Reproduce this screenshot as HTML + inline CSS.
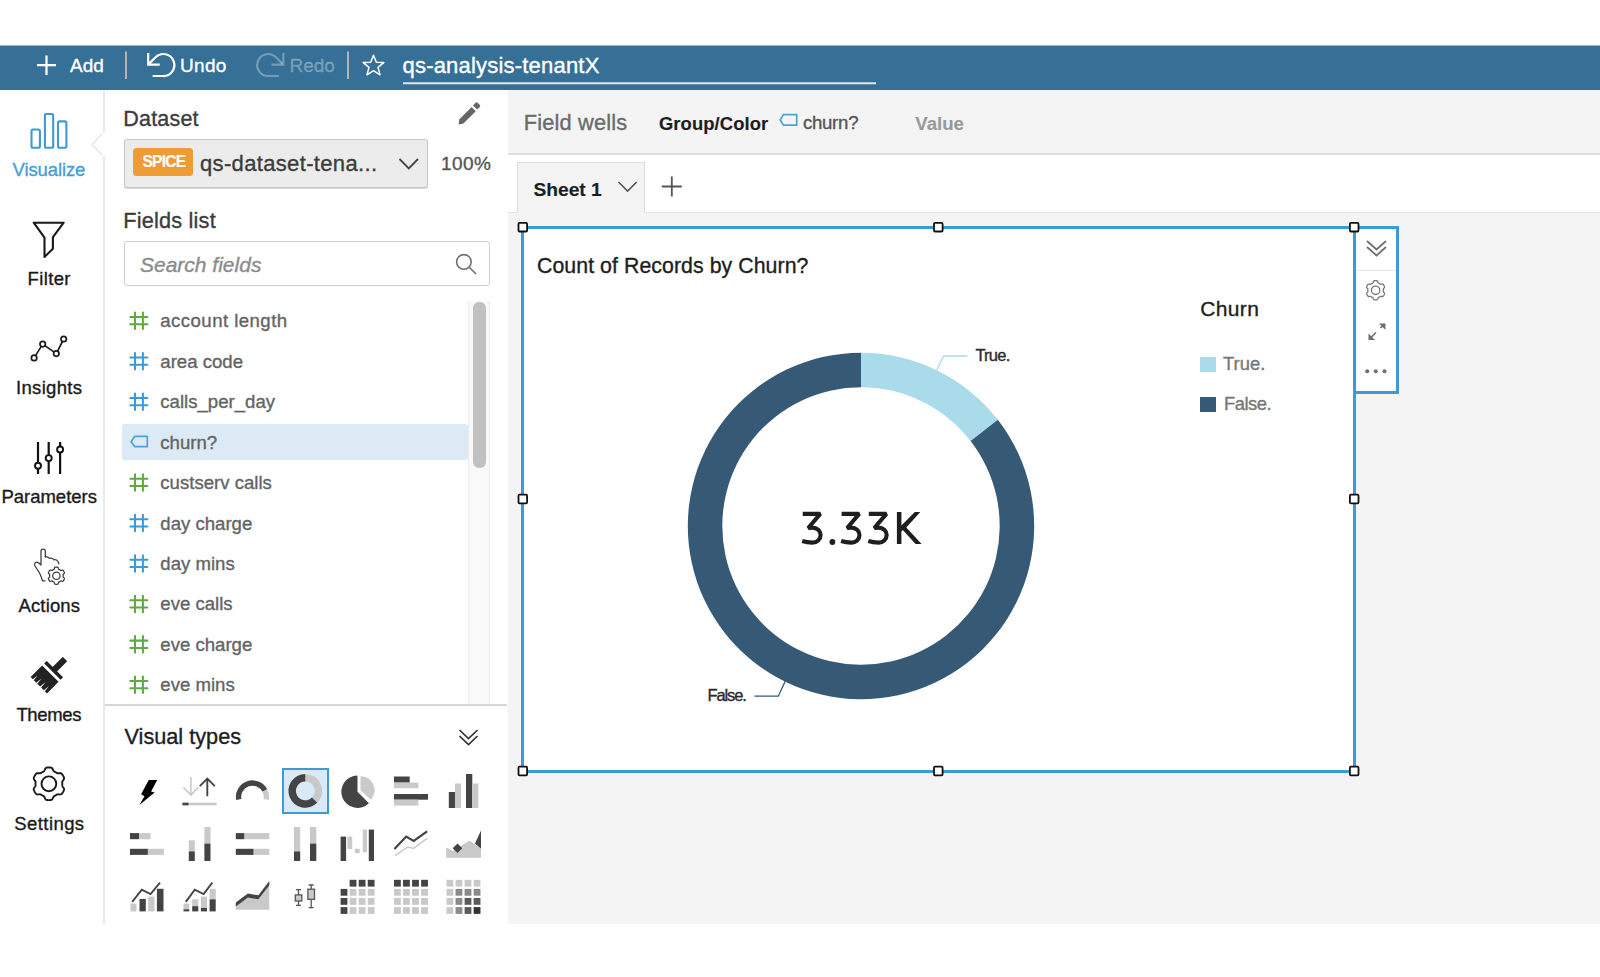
<!DOCTYPE html>
<html><head><meta charset="utf-8">
<style>
*{box-sizing:border-box;margin:0;padding:0}
html,body{width:1600px;height:977px;overflow:hidden;background:#fff;font-family:"Liberation Sans",sans-serif;position:relative}
.a{position:absolute;white-space:nowrap}
svg.a{overflow:visible}
</style></head><body>
<div class="a" style="left:0px;top:45px;width:1600px;height:1px;background:#9bb8ca"></div>
<div class="a" style="left:0px;top:46px;width:1600px;height:44px;background:#367096"></div>
<div class="a" style="left:103.2px;top:90px;width:2px;height:834px;background:#e9e9e9"></div>
<div class="a" style="left:507.5px;top:90px;width:1.5px;height:834px;background:#e2e2e2"></div>
<div class="a" style="left:508px;top:90px;width:1092px;height:63px;background:#f4f4f4"></div>
<div class="a" style="left:508px;top:153px;width:1092px;height:2px;background:#dcdcdc"></div>
<div class="a" style="left:508px;top:155px;width:1092px;height:57px;background:#fff"></div>
<div class="a" style="left:508px;top:212px;width:1092px;height:1px;background:#e4e4e4"></div>
<div class="a" style="left:508px;top:213px;width:1092px;height:711px;background:#f4f4f4"></div>
<svg class="a" style="left:0;top:0" width="1600" height="977" viewBox="0 0 1600 977"><g stroke="#fff" stroke-width="2.2" fill="none"><path d="M46.5,55.5V75M37,65.2H56"/><path d="M148.2,54V64.6H158.6" stroke-linecap="square"/><path d="M149.2,63.6L155.5,57.3A11,11 0 1 1 162.6,76H152.6"/></g><g stroke="rgba(255,255,255,0.3)" stroke-width="2.2" fill="none"><path d="M283.3,54V64.6H272.5" stroke-linecap="square"/><path d="M282.3,63.6L276,57.3A11,11 0 1 0 268.9,76H278.9"/></g><path d="M126,51.5V79M348,51.5V79" stroke="#b4b4b4" stroke-width="2"/><path d="M373.5,55.2L376.3,62.2L383.8,62.6L378,67.4L380,74.8L373.5,70.6L367,74.8L369,67.4L363.2,62.6L370.7,62.2Z" stroke="#fff" stroke-width="1.5" fill="none" stroke-linejoin="round"/><path d="M403,83.2H876" stroke="#dfe7ee" stroke-width="2"/></svg>
<div class="a" style="left:70.0px;top:56.3px;font-size:19px;line-height:19px;color:#fff;font-weight:400;font-style:normal;letter-spacing:0px;-webkit-text-stroke:0.35px #fff;">Add</div>
<div class="a" style="left:180.0px;top:56.3px;font-size:19px;line-height:19px;color:#fff;font-weight:400;font-style:normal;letter-spacing:0.3px;-webkit-text-stroke:0.35px #fff;">Undo</div>
<div class="a" style="left:289.5px;top:56.3px;font-size:19px;line-height:19px;color:rgba(255,255,255,0.3);font-weight:400;font-style:normal;letter-spacing:0px;-webkit-text-stroke:0.35px rgba(255,255,255,0.3);">Redo</div>
<div class="a" style="left:402.5px;top:55.4px;font-size:22px;line-height:22px;color:#fff;font-weight:400;font-style:normal;letter-spacing:0.2px;-webkit-text-stroke:0.35px #fff;">qs-analysis-tenantX</div>
<svg class="a" style="left:0;top:0" width="1600" height="977" viewBox="0 0 1600 977"><path d="M104.5,131.5L92,144.5L104.5,157.5" stroke="#e4e4e4" stroke-width="1.3" fill="#fff"/><rect x="102.5" y="132.5" width="3" height="24" fill="#fff"/></svg>
<svg class="a" style="left:0;top:0" width="1600" height="977" viewBox="0 0 1600 977"><g fill="none" stroke="#3d9ad6" stroke-width="2.1"><rect x="31.5" y="129.5" width="8.4" height="18.2" rx="1.5"/><rect x="44.9" y="114" width="8.3" height="33.7" rx="1.5"/><rect x="58" y="121.4" width="8.4" height="26.3" rx="1.5"/></g></svg>
<svg class="a" style="left:0;top:0" width="1600" height="977" viewBox="0 0 1600 977"><path d="M33.7,222.7H63.7L52.9,237.1V248.7L44.5,256.9V237.6Z" fill="none" stroke="#1a1a1a" stroke-width="2.1" stroke-linejoin="round"/></svg>
<svg class="a" style="left:0;top:0" width="1600" height="977" viewBox="0 0 1600 977"><g fill="#fff" stroke="#1a1a1a" stroke-width="1.7"><path d="M34.1,357.9L42.7,344.1L56.3,353.6L63.7,339" fill="none"/><circle cx="34.1" cy="357.9" r="2.7"/><circle cx="42.7" cy="344.1" r="2.7"/><circle cx="56.3" cy="353.6" r="2.7"/><circle cx="63.7" cy="339" r="2.7"/></g></svg>
<svg class="a" style="left:0;top:0" width="1600" height="977" viewBox="0 0 1600 977"><g fill="#fff" stroke="#111" stroke-width="2.2"><path d="M38,442V474M48.7,442V474M60.1,442V474"/></g><g fill="#fff" stroke="#111" stroke-width="1.9"><circle cx="38" cy="465.7" r="3"/><circle cx="48.7" cy="458.1" r="3"/><circle cx="60.1" cy="449.5" r="3"/></g></svg>
<svg class="a" style="left:0;top:0" width="1600" height="977" viewBox="0 0 1600 977"><g fill="none" stroke="#3a3a3a" stroke-width="1.25" stroke-linejoin="round" stroke-linecap="round"><path d="M45.3,557V551Q45.3,549 43.2,549Q41,549 41,551V565L38.5,562.8Q36.6,561.4 35.2,562.8Q34,564.2 35,566L39.5,573Q41.5,577 42.5,580.8H45"/><path d="M45.3,556.6Q47.8,556.4 49.6,558.4Q52,557.6 54,559.8Q56.5,559.3 57.8,561.3Q58.8,562.5 58.8,563.8"/><path d="M63.20,575.70L63.20,575.82L63.20,575.94L63.19,576.06L63.18,576.17L63.17,576.29L63.16,576.41L63.15,576.53L63.13,576.65L63.12,576.76L63.13,576.89L63.19,577.02L63.31,577.17L63.46,577.33L63.65,577.51L63.84,577.69L64.03,577.89L64.19,578.08L64.33,578.28L64.42,578.46L64.45,578.63L64.43,578.78L64.37,578.92L64.32,579.06L64.26,579.20L64.19,579.33L64.13,579.47L64.06,579.60L63.99,579.74L63.92,579.87L63.85,580.00L63.77,580.13L63.69,580.26L63.61,580.38L63.53,580.51L63.44,580.63L63.36,580.75L63.27,580.88L63.18,580.99L63.08,581.11L62.96,581.21L62.80,581.26L62.60,581.28L62.36,581.26L62.11,581.21L61.84,581.14L61.59,581.07L61.34,581.00L61.13,580.95L60.94,580.92L60.79,580.93L60.68,580.98L60.59,581.06L60.49,581.13L60.40,581.20L60.30,581.27L60.20,581.34L60.10,581.40L60.00,581.47L59.90,581.53L59.80,581.59L59.70,581.65L59.59,581.70L59.49,581.76L59.38,581.81L59.27,581.86L59.17,581.91L59.06,581.96L58.95,582.00L58.84,582.05L58.74,582.12L58.65,582.24L58.58,582.42L58.52,582.63L58.46,582.88L58.39,583.14L58.32,583.40L58.23,583.64L58.13,583.85L58.02,584.02L57.89,584.14L57.75,584.19L57.60,584.22L57.45,584.24L57.30,584.25L57.15,584.27L57.00,584.28L56.85,584.29L56.70,584.29L56.55,584.30L56.40,584.30L56.25,584.30L56.10,584.29L55.95,584.29L55.80,584.28L55.65,584.27L55.50,584.25L55.35,584.24L55.20,584.22L55.05,584.19L54.91,584.14L54.78,584.02L54.67,583.85L54.57,583.64L54.48,583.40L54.41,583.14L54.34,582.88L54.28,582.63L54.22,582.42L54.15,582.24L54.06,582.12L53.96,582.05L53.85,582.00L53.74,581.96L53.63,581.91L53.53,581.86L53.42,581.81L53.31,581.76L53.21,581.70L53.10,581.65L53.00,581.59L52.90,581.53L52.80,581.47L52.70,581.40L52.60,581.34L52.50,581.27L52.40,581.20L52.31,581.13L52.21,581.06L52.12,580.98L52.01,580.93L51.86,580.92L51.67,580.95L51.46,581.00L51.21,581.07L50.96,581.14L50.69,581.21L50.44,581.26L50.20,581.28L50.00,581.26L49.84,581.21L49.72,581.11L49.62,580.99L49.53,580.88L49.44,580.75L49.36,580.63L49.27,580.51L49.19,580.38L49.11,580.26L49.03,580.13L48.95,580.00L48.88,579.87L48.81,579.74L48.74,579.60L48.67,579.47L48.61,579.33L48.54,579.20L48.48,579.06L48.43,578.92L48.37,578.78L48.35,578.63L48.38,578.46L48.47,578.28L48.61,578.08L48.77,577.89L48.96,577.69L49.15,577.51L49.34,577.33L49.49,577.17L49.61,577.02L49.67,576.89L49.68,576.76L49.67,576.65L49.65,576.53L49.64,576.41L49.63,576.29L49.62,576.17L49.61,576.06L49.60,575.94L49.60,575.82L49.60,575.70L49.60,575.58L49.60,575.46L49.61,575.34L49.62,575.23L49.63,575.11L49.64,574.99L49.65,574.87L49.67,574.75L49.68,574.64L49.67,574.51L49.61,574.38L49.49,574.23L49.34,574.07L49.15,573.89L48.96,573.71L48.77,573.51L48.61,573.32L48.47,573.12L48.38,572.94L48.35,572.77L48.37,572.62L48.43,572.48L48.48,572.34L48.54,572.20L48.61,572.07L48.67,571.93L48.74,571.80L48.81,571.66L48.88,571.53L48.95,571.40L49.03,571.27L49.11,571.14L49.19,571.02L49.27,570.89L49.36,570.77L49.44,570.65L49.53,570.52L49.62,570.41L49.72,570.29L49.84,570.19L50.00,570.14L50.20,570.12L50.44,570.14L50.69,570.19L50.96,570.26L51.21,570.33L51.46,570.40L51.67,570.45L51.86,570.48L52.01,570.47L52.12,570.42L52.21,570.34L52.31,570.27L52.40,570.20L52.50,570.13L52.60,570.06L52.70,570.00L52.80,569.93L52.90,569.87L53.00,569.81L53.10,569.75L53.21,569.70L53.31,569.64L53.42,569.59L53.53,569.54L53.63,569.49L53.74,569.44L53.85,569.40L53.96,569.35L54.06,569.28L54.15,569.16L54.22,568.98L54.28,568.77L54.34,568.52L54.41,568.26L54.48,568.00L54.57,567.76L54.67,567.55L54.78,567.38L54.91,567.26L55.05,567.21L55.20,567.18L55.35,567.16L55.50,567.15L55.65,567.13L55.80,567.12L55.95,567.11L56.10,567.11L56.25,567.10L56.40,567.10L56.55,567.10L56.70,567.11L56.85,567.11L57.00,567.12L57.15,567.13L57.30,567.15L57.45,567.16L57.60,567.18L57.75,567.21L57.89,567.26L58.02,567.38L58.13,567.55L58.23,567.76L58.32,568.00L58.39,568.26L58.46,568.52L58.52,568.77L58.58,568.98L58.65,569.16L58.74,569.28L58.84,569.35L58.95,569.40L59.06,569.44L59.17,569.49L59.27,569.54L59.38,569.59L59.49,569.64L59.59,569.70L59.70,569.75L59.80,569.81L59.90,569.87L60.00,569.93L60.10,570.00L60.20,570.06L60.30,570.13L60.40,570.20L60.49,570.27L60.59,570.34L60.68,570.42L60.79,570.47L60.94,570.48L61.13,570.45L61.34,570.40L61.59,570.33L61.84,570.26L62.11,570.19L62.36,570.14L62.60,570.12L62.80,570.14L62.96,570.19L63.08,570.29L63.18,570.41L63.27,570.52L63.36,570.65L63.44,570.77L63.53,570.89L63.61,571.02L63.69,571.14L63.77,571.27L63.85,571.40L63.92,571.53L63.99,571.66L64.06,571.80L64.13,571.93L64.19,572.07L64.26,572.20L64.32,572.34L64.37,572.48L64.43,572.62L64.45,572.77L64.42,572.94L64.33,573.12L64.19,573.32L64.03,573.51L63.84,573.71L63.65,573.89L63.46,574.07L63.31,574.23L63.19,574.38L63.13,574.51L63.12,574.64L63.13,574.75L63.15,574.87L63.16,574.99L63.17,575.11L63.18,575.23L63.19,575.34L63.20,575.46L63.20,575.58Z"/><circle cx="56.4" cy="575.7" r="3.7"/></g></svg>
<svg class="a" style="left:0;top:0" width="1600" height="977" viewBox="0 0 1600 977"><g fill="#222" transform="translate(49 675) rotate(45)"><rect x="-3.1" y="-22.6" width="6.2" height="15" rx="0.6"/><rect x="-11.6" y="-8.4" width="23.2" height="3.6" rx="0.4"/><path d="M-11.6,-1.9H11.6V14.4H8.5L7.8,7.8L7,14.4H3.3L2.6,7.2L1.8,14.4H-2.1L-2.8,7.6L-3.5,14.4H-7.1L-7.8,8.4L-8.5,14.4H-11.6Z"/></g></svg>
<svg class="a" style="left:0;top:0" width="1600" height="977" viewBox="0 0 1600 977"><g fill="none" stroke="#1a1a1a" stroke-width="1.9" stroke-linejoin="round"><path d="M62.30,783.80L62.30,784.03L62.29,784.27L62.28,784.50L62.27,784.73L62.25,784.97L62.23,785.20L62.20,785.43L62.23,785.67L62.30,785.92L62.42,786.18L62.58,786.46L62.77,786.75L62.98,787.05L63.20,787.36L63.41,787.69L63.62,788.02L63.79,788.35L63.94,788.69L64.04,789.01L64.09,789.33L64.08,789.63L64.01,789.91L63.90,790.17L63.79,790.43L63.67,790.69L63.55,790.95L63.42,791.20L63.29,791.45L63.16,791.70L63.02,791.95L62.87,792.20L62.72,792.44L62.57,792.68L62.41,792.91L62.25,793.15L62.09,793.38L61.92,793.61L61.74,793.83L61.53,794.03L61.28,794.19L60.98,794.30L60.65,794.38L60.29,794.42L59.91,794.43L59.52,794.42L59.13,794.40L58.75,794.37L58.39,794.33L58.04,794.32L57.72,794.32L57.44,794.34L57.19,794.40L56.97,794.51L56.78,794.64L56.59,794.78L56.39,794.91L56.20,795.04L56.00,795.16L55.80,795.29L55.60,795.40L55.40,795.52L55.19,795.63L54.98,795.74L54.77,795.84L54.56,795.94L54.35,796.04L54.14,796.14L53.94,796.28L53.76,796.47L53.59,796.70L53.44,796.97L53.28,797.28L53.12,797.62L52.96,797.96L52.79,798.31L52.60,798.65L52.40,798.98L52.19,799.27L51.95,799.52L51.71,799.71L51.44,799.86L51.17,799.94L50.89,799.98L50.60,800.01L50.32,800.04L50.04,800.06L49.75,800.08L49.47,800.09L49.18,800.10L48.90,800.10L48.62,800.10L48.33,800.09L48.05,800.08L47.76,800.06L47.48,800.04L47.20,800.01L46.91,799.98L46.63,799.94L46.36,799.86L46.09,799.71L45.85,799.52L45.61,799.27L45.40,798.98L45.20,798.65L45.01,798.31L44.84,797.96L44.68,797.62L44.52,797.28L44.36,796.97L44.21,796.70L44.04,796.47L43.86,796.28L43.66,796.14L43.45,796.04L43.24,795.94L43.03,795.84L42.82,795.74L42.61,795.63L42.40,795.52L42.20,795.40L42.00,795.29L41.80,795.16L41.60,795.04L41.41,794.91L41.21,794.78L41.02,794.64L40.83,794.51L40.61,794.40L40.36,794.34L40.08,794.32L39.76,794.32L39.41,794.33L39.05,794.37L38.67,794.40L38.28,794.42L37.89,794.43L37.51,794.42L37.15,794.38L36.82,794.30L36.52,794.19L36.27,794.03L36.06,793.83L35.88,793.61L35.71,793.38L35.55,793.15L35.39,792.91L35.23,792.68L35.08,792.44L34.93,792.20L34.78,791.95L34.64,791.70L34.51,791.45L34.38,791.20L34.25,790.95L34.13,790.69L34.01,790.43L33.90,790.17L33.79,789.91L33.72,789.63L33.71,789.33L33.76,789.01L33.86,788.69L34.01,788.35L34.18,788.02L34.39,787.69L34.60,787.36L34.82,787.05L35.03,786.75L35.22,786.46L35.38,786.18L35.50,785.92L35.57,785.67L35.60,785.43L35.57,785.20L35.55,784.97L35.53,784.73L35.52,784.50L35.51,784.27L35.50,784.03L35.50,783.80L35.50,783.57L35.51,783.33L35.52,783.10L35.53,782.87L35.55,782.63L35.57,782.40L35.60,782.17L35.57,781.93L35.50,781.68L35.38,781.42L35.22,781.14L35.03,780.85L34.82,780.55L34.60,780.24L34.39,779.91L34.18,779.58L34.01,779.25L33.86,778.91L33.76,778.59L33.71,778.27L33.72,777.97L33.79,777.69L33.90,777.43L34.01,777.17L34.13,776.91L34.25,776.65L34.38,776.40L34.51,776.15L34.64,775.90L34.78,775.65L34.93,775.40L35.08,775.16L35.23,774.92L35.39,774.69L35.55,774.45L35.71,774.22L35.88,773.99L36.06,773.77L36.27,773.57L36.52,773.41L36.82,773.30L37.15,773.22L37.51,773.18L37.89,773.17L38.28,773.18L38.67,773.20L39.05,773.23L39.41,773.27L39.76,773.28L40.08,773.28L40.36,773.26L40.61,773.20L40.83,773.09L41.02,772.96L41.21,772.82L41.41,772.69L41.60,772.56L41.80,772.44L42.00,772.31L42.20,772.20L42.40,772.08L42.61,771.97L42.82,771.86L43.03,771.76L43.24,771.66L43.45,771.56L43.66,771.46L43.86,771.32L44.04,771.13L44.21,770.90L44.36,770.63L44.52,770.32L44.68,769.98L44.84,769.64L45.01,769.29L45.20,768.95L45.40,768.62L45.61,768.33L45.85,768.08L46.09,767.89L46.36,767.74L46.63,767.66L46.91,767.62L47.20,767.59L47.48,767.56L47.76,767.54L48.05,767.52L48.33,767.51L48.62,767.50L48.90,767.50L49.18,767.50L49.47,767.51L49.75,767.52L50.04,767.54L50.32,767.56L50.60,767.59L50.89,767.62L51.17,767.66L51.44,767.74L51.71,767.89L51.95,768.08L52.19,768.33L52.40,768.62L52.60,768.95L52.79,769.29L52.96,769.64L53.12,769.98L53.28,770.32L53.44,770.63L53.59,770.90L53.76,771.13L53.94,771.32L54.14,771.46L54.35,771.56L54.56,771.66L54.77,771.76L54.98,771.86L55.19,771.97L55.40,772.08L55.60,772.20L55.80,772.31L56.00,772.44L56.20,772.56L56.39,772.69L56.59,772.82L56.78,772.96L56.97,773.09L57.19,773.20L57.44,773.26L57.72,773.28L58.04,773.28L58.39,773.27L58.75,773.23L59.13,773.20L59.52,773.18L59.91,773.17L60.29,773.18L60.65,773.22L60.98,773.30L61.28,773.41L61.53,773.57L61.74,773.77L61.92,773.99L62.09,774.22L62.25,774.45L62.41,774.69L62.57,774.92L62.72,775.16L62.87,775.40L63.02,775.65L63.16,775.90L63.29,776.15L63.42,776.40L63.55,776.65L63.67,776.91L63.79,777.17L63.90,777.43L64.01,777.69L64.08,777.97L64.09,778.27L64.04,778.59L63.94,778.91L63.79,779.25L63.62,779.58L63.41,779.91L63.20,780.24L62.98,780.55L62.77,780.85L62.58,781.14L62.42,781.42L62.30,781.68L62.23,781.93L62.20,782.17L62.23,782.40L62.25,782.63L62.27,782.87L62.28,783.10L62.29,783.33L62.30,783.57Z"/><circle cx="48.9" cy="783.8" r="7.4"/></g></svg>
<div class="a" style="left:-11.1px;top:160.9px;font-size:18.5px;line-height:18.5px;color:#45a0d8;font-weight:400;font-style:normal;letter-spacing:-0.12px;-webkit-text-stroke:0.35px #45a0d8;width:120px;text-align:center">Visualize</div>
<div class="a" style="left:-10.8px;top:270.2px;font-size:18.5px;line-height:18.5px;color:#1a1a1a;font-weight:400;font-style:normal;letter-spacing:0.38px;-webkit-text-stroke:0.35px #1a1a1a;width:120px;text-align:center">Filter</div>
<div class="a" style="left:-10.8px;top:379.3px;font-size:18.5px;line-height:18.5px;color:#1a1a1a;font-weight:400;font-style:normal;letter-spacing:0.34px;-webkit-text-stroke:0.35px #1a1a1a;width:120px;text-align:center">Insights</div>
<div class="a" style="left:-10.8px;top:487.6px;font-size:18.5px;line-height:18.5px;color:#1a1a1a;font-weight:400;font-style:normal;letter-spacing:-0.03px;-webkit-text-stroke:0.35px #1a1a1a;width:120px;text-align:center">Parameters</div>
<div class="a" style="left:-10.7px;top:596.6px;font-size:18.5px;line-height:18.5px;color:#1a1a1a;font-weight:400;font-style:normal;letter-spacing:0.15px;-webkit-text-stroke:0.35px #1a1a1a;width:120px;text-align:center">Actions</div>
<div class="a" style="left:-11.2px;top:706.3px;font-size:18.5px;line-height:18.5px;color:#1a1a1a;font-weight:400;font-style:normal;letter-spacing:-0.34px;-webkit-text-stroke:0.35px #1a1a1a;width:120px;text-align:center">Themes</div>
<div class="a" style="left:-10.6px;top:814.6px;font-size:18.5px;line-height:18.5px;color:#1a1a1a;font-weight:400;font-style:normal;letter-spacing:0.43px;-webkit-text-stroke:0.35px #1a1a1a;width:120px;text-align:center">Settings</div>
<div class="a" style="left:123.3px;top:109.2px;font-size:21.5px;line-height:21.5px;color:#3c3c3c;font-weight:400;font-style:normal;letter-spacing:0.2px;-webkit-text-stroke:0.35px #3c3c3c;">Dataset</div>
<svg class="a" style="left:0;top:0" width="1600" height="977" viewBox="0 0 1600 977"><g fill="#666"><path d="M458.6,124.6L459.2,119.4L471.6,107L475.8,111.2L463.4,123.6Z"/><path d="M473,105.4L475.6,102.8Q476.6,101.8 477.6,102.8L479.8,105Q480.8,106 479.8,107L477.2,109.6Z"/></g></svg>
<div class="a" style="left:124px;top:139px;width:304px;height:49px;background:#ececec;border:1px solid #c6c6c6;border-radius:3px;box-shadow:0 1px 0 #d6d6d6"></div>
<div class="a" style="left:133px;top:147.5px;width:60px;height:28px;background:#f09c35;border-radius:3.5px"></div>
<div class="a" style="left:142.5px;top:154.2px;font-size:15.6px;line-height:15.6px;color:#fff;font-weight:700;font-style:normal;letter-spacing:-0.8px;-webkit-text-stroke:0.15px #fff;">SPICE</div>
<div class="a" style="left:200.0px;top:153.0px;font-size:22px;line-height:22px;color:#3c3c3c;font-weight:400;font-style:normal;letter-spacing:0.34px;-webkit-text-stroke:0.35px #3c3c3c;">qs-dataset-tena...</div>
<svg class="a" style="left:0;top:0" width="1600" height="977" viewBox="0 0 1600 977"><path d="M399.5,159L408.8,168.5L418,159" fill="none" stroke="#444" stroke-width="1.8"/></svg>
<div class="a" style="left:441.0px;top:154.1px;font-size:19px;line-height:19px;color:#555;font-weight:400;font-style:normal;letter-spacing:0.4px;-webkit-text-stroke:0.35px #555;">100%</div>
<div class="a" style="left:123.3px;top:210.0px;font-size:21.7px;line-height:21.7px;color:#3c3c3c;font-weight:400;font-style:normal;letter-spacing:0.2px;-webkit-text-stroke:0.35px #3c3c3c;">Fields list</div>
<div class="a" style="left:124px;top:241px;width:366px;height:45px;background:#fff;border:1px solid #cfcfcf;border-radius:3px"></div>
<div class="a" style="left:140.0px;top:253.9px;font-size:21px;line-height:21px;color:#8c8c8c;font-weight:400;font-style:italic;letter-spacing:0px;-webkit-text-stroke:0.35px #8c8c8c;">Search fields</div>
<svg class="a" style="left:0;top:0" width="1600" height="977" viewBox="0 0 1600 977"><g fill="none" stroke="#707070" stroke-width="1.6"><circle cx="463.9" cy="261.9" r="7.3"/><path d="M469.2,267.2L476,274"/></g></svg>
<div class="a" style="left:467.5px;top:301px;width:22px;height:404px;background:#f9f9f9;border-left:1px solid #ececec;border-right:1px solid #ececec"></div>
<div class="a" style="left:473.4px;top:302.4px;width:12.2px;height:166px;background:#c1c1c1;border-radius:6px"></div>
<div class="a" style="left:122px;top:423.7px;width:345.5px;height:36.5px;background:#dbeaf5;border-radius:3px"></div>
<div class="a" style="left:160.3px;top:312.2px;font-size:18.6px;line-height:18.6px;color:#646464;font-weight:400;font-style:normal;letter-spacing:0.45px;-webkit-text-stroke:0.35px #646464;">account length</div>
<svg class="a" style="left:0;top:0" width="1600" height="977" viewBox="0 0 1600 977"><path transform="translate(0 0.00)" d="M135,312.5V329M142.9,312.5V329M130.3,317H147.4M130.3,324.3H147.4" fill="none" stroke="#5aad3a" stroke-width="2.05" stroke-linecap="round"/></svg>
<div class="a" style="left:160.3px;top:352.7px;font-size:18.6px;line-height:18.6px;color:#646464;font-weight:400;font-style:normal;letter-spacing:0px;-webkit-text-stroke:0.35px #646464;">area code</div>
<svg class="a" style="left:0;top:0" width="1600" height="977" viewBox="0 0 1600 977"><path transform="translate(0 40.45)" d="M135,312.5V329M142.9,312.5V329M130.3,317H147.4M130.3,324.3H147.4" fill="none" stroke="#3d9ad6" stroke-width="2.05" stroke-linecap="round"/></svg>
<div class="a" style="left:160.3px;top:393.1px;font-size:18.6px;line-height:18.6px;color:#646464;font-weight:400;font-style:normal;letter-spacing:0px;-webkit-text-stroke:0.35px #646464;">calls_per_day</div>
<svg class="a" style="left:0;top:0" width="1600" height="977" viewBox="0 0 1600 977"><path transform="translate(0 80.90)" d="M135,312.5V329M142.9,312.5V329M130.3,317H147.4M130.3,324.3H147.4" fill="none" stroke="#3d9ad6" stroke-width="2.05" stroke-linecap="round"/></svg>
<div class="a" style="left:160.3px;top:433.6px;font-size:18.6px;line-height:18.6px;color:#646464;font-weight:400;font-style:normal;letter-spacing:0px;-webkit-text-stroke:0.35px #646464;">churn?</div>
<svg class="a" style="left:0;top:0" width="1600" height="977" viewBox="0 0 1600 977"><path transform="translate(0 441.70)" d="M131.1,0L134.7,-5.3H147.3V5H134.7Z" fill="none" stroke="#4aa3d8" stroke-width="1.7" stroke-linejoin="round"/></svg>
<div class="a" style="left:160.3px;top:474.0px;font-size:18.6px;line-height:18.6px;color:#646464;font-weight:400;font-style:normal;letter-spacing:0px;-webkit-text-stroke:0.35px #646464;">custserv calls</div>
<svg class="a" style="left:0;top:0" width="1600" height="977" viewBox="0 0 1600 977"><path transform="translate(0 161.80)" d="M135,312.5V329M142.9,312.5V329M130.3,317H147.4M130.3,324.3H147.4" fill="none" stroke="#5aad3a" stroke-width="2.05" stroke-linecap="round"/></svg>
<div class="a" style="left:160.3px;top:514.5px;font-size:18.6px;line-height:18.6px;color:#646464;font-weight:400;font-style:normal;letter-spacing:0px;-webkit-text-stroke:0.35px #646464;">day charge</div>
<svg class="a" style="left:0;top:0" width="1600" height="977" viewBox="0 0 1600 977"><path transform="translate(0 202.25)" d="M135,312.5V329M142.9,312.5V329M130.3,317H147.4M130.3,324.3H147.4" fill="none" stroke="#3d9ad6" stroke-width="2.05" stroke-linecap="round"/></svg>
<div class="a" style="left:160.3px;top:554.9px;font-size:18.6px;line-height:18.6px;color:#646464;font-weight:400;font-style:normal;letter-spacing:0px;-webkit-text-stroke:0.35px #646464;">day mins</div>
<svg class="a" style="left:0;top:0" width="1600" height="977" viewBox="0 0 1600 977"><path transform="translate(0 242.70)" d="M135,312.5V329M142.9,312.5V329M130.3,317H147.4M130.3,324.3H147.4" fill="none" stroke="#3d9ad6" stroke-width="2.05" stroke-linecap="round"/></svg>
<div class="a" style="left:160.3px;top:595.4px;font-size:18.6px;line-height:18.6px;color:#646464;font-weight:400;font-style:normal;letter-spacing:0px;-webkit-text-stroke:0.35px #646464;">eve calls</div>
<svg class="a" style="left:0;top:0" width="1600" height="977" viewBox="0 0 1600 977"><path transform="translate(0 283.15)" d="M135,312.5V329M142.9,312.5V329M130.3,317H147.4M130.3,324.3H147.4" fill="none" stroke="#5aad3a" stroke-width="2.05" stroke-linecap="round"/></svg>
<div class="a" style="left:160.3px;top:635.8px;font-size:18.6px;line-height:18.6px;color:#646464;font-weight:400;font-style:normal;letter-spacing:0px;-webkit-text-stroke:0.35px #646464;">eve charge</div>
<svg class="a" style="left:0;top:0" width="1600" height="977" viewBox="0 0 1600 977"><path transform="translate(0 323.60)" d="M135,312.5V329M142.9,312.5V329M130.3,317H147.4M130.3,324.3H147.4" fill="none" stroke="#5aad3a" stroke-width="2.05" stroke-linecap="round"/></svg>
<div class="a" style="left:160.3px;top:676.3px;font-size:18.6px;line-height:18.6px;color:#646464;font-weight:400;font-style:normal;letter-spacing:0px;-webkit-text-stroke:0.35px #646464;">eve mins</div>
<svg class="a" style="left:0;top:0" width="1600" height="977" viewBox="0 0 1600 977"><path transform="translate(0 364.05)" d="M135,312.5V329M142.9,312.5V329M130.3,317H147.4M130.3,324.3H147.4" fill="none" stroke="#5aad3a" stroke-width="2.05" stroke-linecap="round"/></svg>
<div class="a" style="left:105px;top:704px;width:402px;height:1.5px;background:#d6d6d6"></div>
<div class="a" style="left:124.5px;top:725.8px;font-size:21.7px;line-height:21.7px;color:#1e1e1e;font-weight:400;font-style:normal;letter-spacing:0px;-webkit-text-stroke:0.35px #1e1e1e;">Visual types</div>
<svg class="a" style="left:0;top:0" width="1600" height="977" viewBox="0 0 1600 977"><g fill="none" stroke="#333" stroke-width="1.7"><path d="M459.5,730L468.5,738.5L477.5,730M459.5,736L468.5,744.5L477.5,736"/></g></svg>
<div class="a" style="left:282px;top:767.8px;width:47px;height:46px;background:#d9e9f5;border:2.8px solid #3d9ad6"></div>
<svg class="a" style="left:0;top:0" width="1600" height="977" viewBox="0 0 1600 977"><path d="M148.75,780.1H157.2L151.1,791.4L154.6,792.5L139.4,804.9L144.5,796.2L141.1,794.2Z" fill="#000"/><g fill="none" stroke="#c9c9c9" stroke-width="1.6"><path d="M190.9,777V795M183.4,787.3L190.9,795L198.4,787.3"/></g><g fill="none" stroke="#444" stroke-width="1.9"><path d="M207.3,779V796.3M199.8,786.1L207.3,778.6L214.8,786.1"/></g><rect x="182.5" y="802.7" width="34.2" height="2.6" fill="#c9c9c9"/><rect x="182.5" y="802.7" width="6" height="2.6" fill="#444"/><path d="M236.15,799.88A16.6,16.6 0 0 1 267.16,789.21L262.48,791.69A11.3,11.3 0 0 0 241.37,798.96Z" fill="#444"/><path d="M267.16,789.21A16.6,16.6 0 0 1 268.85,799.88L263.63,798.96A11.3,11.3 0 0 0 262.48,791.69Z" fill="#c9c9c9"/><path d="M305.30,774.00A16.9,16.9 0 0 1 317.25,802.85L311.95,797.55A9.4,9.4 0 0 0 305.30,781.50Z" fill="#c9c9c9"/><path d="M317.25,802.85A16.9,16.9 0 1 1 305.30,774.00L305.30,781.50A9.4,9.4 0 1 0 311.95,797.55Z" fill="#444"/><path d="M357.5,791.7L368.96,803.16A16.2,16.2 0 1 1 357.50,775.50Z" fill="#444"/><path d="M360.5,790.3L360.50,776.30A14,14 0 0 1 370.90,799.67Z" fill="#c9c9c9"/><rect x="394" y="776.5" width="15.7" height="6.1" fill="#444"/><rect x="394" y="782.6" width="24.4" height="5.6" fill="#c9c9c9"/><rect x="394" y="794" width="34" height="5.7" fill="#444"/><rect x="394" y="799.7" width="24.4" height="5.9" fill="#c9c9c9"/><rect x="448.8" y="792" width="6.2" height="16" fill="#444"/><rect x="455" y="783.5" width="6" height="24.5" fill="#c9c9c9"/><rect x="466" y="774" width="6.3" height="34" fill="#444"/><rect x="472.3" y="783.5" width="6.1" height="24.5" fill="#c9c9c9"/><rect x="130" y="833.1" width="9.1" height="6.1" fill="#444"/><rect x="139.1" y="833.1" width="11.4" height="6.1" fill="#c9c9c9"/><rect x="130" y="848.8" width="17.9" height="6.1" fill="#444"/><rect x="147.9" y="848.8" width="16" height="6.1" fill="#c9c9c9"/><rect x="188.8" y="840.4" width="6" height="11" fill="#c9c9c9"/><rect x="188.8" y="851.4" width="6" height="9.6" fill="#444"/><rect x="204.4" y="827" width="6.1" height="16.6" fill="#c9c9c9"/><rect x="204.4" y="843.6" width="6.1" height="17.4" fill="#444"/><rect x="235.8" y="833.1" width="8.7" height="6.1" fill="#444"/><rect x="244.5" y="833.1" width="24.8" height="6.1" fill="#c9c9c9"/><rect x="235.8" y="848.8" width="17.9" height="6.1" fill="#444"/><rect x="253.7" y="848.8" width="15.6" height="6.1" fill="#c9c9c9"/><rect x="294" y="827" width="6.2" height="24.4" fill="#c9c9c9"/><rect x="294" y="851.4" width="6.2" height="9.6" fill="#444"/><rect x="310" y="827" width="6.3" height="16.6" fill="#c9c9c9"/><rect x="310" y="843.6" width="6.3" height="17.4" fill="#444"/><rect x="340.6" y="836.6" width="5.5" height="24.4" fill="#444"/><rect x="347.5" y="836.6" width="4.7" height="12.5" fill="#c9c9c9"/><rect x="354.8" y="848.8" width="4.9" height="4.3" fill="#c9c9c9"/><rect x="362.7" y="829.6" width="4.3" height="22.6" fill="#c9c9c9"/><rect x="368.8" y="829.6" width="5.2" height="31.4" fill="#444"/><path d="M394.9,855.7L407.9,847L413.7,848.4L427.1,838.3" fill="none" stroke="#c9c9c9" stroke-width="1.5"/><path d="M394.4,849.1L406.2,836.6L413.7,840.9L427.1,831.4" fill="none" stroke="#444" stroke-width="2.2"/><path d="M446.2,847.5L452.5,851L469.7,840.5L481,848.8V857.8H446.2Z" fill="#c9c9c9"/><path d="M457.5,843.5L462.3,848.3L457.5,853.1L452.7,848.3Z" fill="#444"/><path d="M481,830.5L475,843.6L481,848.8Z" fill="#444"/><path d="M132.2,901.9L141.8,889.7L150.5,894L160,882.7" fill="none" stroke="#444" stroke-width="1.9"/><rect x="130.4" y="903.6" width="6.1" height="7.8" fill="#c9c9c9"/><rect x="139.5" y="898.9" width="6.3" height="12.5" fill="#444"/><rect x="148.2" y="896.6" width="6.3" height="14.8" fill="#c9c9c9"/><rect x="156.9" y="888.8" width="6.6" height="22.6" fill="#444"/><path d="M185.8,901.9L194.8,889.7L203.6,894L212.3,882.7" fill="none" stroke="#444" stroke-width="1.9"/><rect x="183.5" y="903.6" width="5.8" height="5.7" fill="#c9c9c9"/><rect x="183.5" y="909.3" width="5.8" height="2.1" fill="#444"/><rect x="192.2" y="899.3" width="6.1" height="6.9" fill="#c9c9c9"/><rect x="192.2" y="906.2" width="6.1" height="5.2" fill="#444"/><rect x="200.9" y="896.6" width="6.1" height="11.3" fill="#c9c9c9"/><rect x="200.9" y="907.9" width="6.1" height="3.5" fill="#444"/><rect x="209.6" y="888.8" width="6.1" height="10.5" fill="#c9c9c9"/><rect x="209.6" y="899.3" width="6.1" height="12.1" fill="#444"/><path d="M235.8,909.7H269.3V883.6L258.4,897.5L247.9,895.5L235.8,904Z" fill="#c9c9c9"/><path d="M235.8,906.5L247.9,897.5L258.4,899.3L269.3,885.3V881L258.4,895.3L247.9,893.5L235.8,902.5Z" fill="#444"/><g fill="#c9c9c9" stroke="#555" stroke-width="1.3"><path d="M298.5,889.7V905.3M296,889.7H301M296,905.3H301M311.2,885V907.6M308.7,885H313.7M308.7,907.6H313.7" fill="none"/><rect x="295.3" y="894.9" width="6.5" height="6.1"/><rect x="307.9" y="889.2" width="6.6" height="10.1"/></g><rect x="349.65" y="879.80" width="6.8" height="6.8" fill="#444"/><rect x="358.70" y="879.80" width="6.8" height="6.8" fill="#444"/><rect x="367.75" y="879.80" width="6.8" height="6.8" fill="#444"/><rect x="340.60" y="888.90" width="6.8" height="6.8" fill="#444"/><rect x="349.65" y="888.90" width="6.8" height="6.8" fill="#c9c9c9"/><rect x="358.70" y="888.90" width="6.8" height="6.8" fill="#c9c9c9"/><rect x="367.75" y="888.90" width="6.8" height="6.8" fill="#c9c9c9"/><rect x="340.60" y="898.00" width="6.8" height="6.8" fill="#444"/><rect x="349.65" y="898.00" width="6.8" height="6.8" fill="#c9c9c9"/><rect x="358.70" y="898.00" width="6.8" height="6.8" fill="#c9c9c9"/><rect x="367.75" y="898.00" width="6.8" height="6.8" fill="#c9c9c9"/><rect x="340.60" y="907.10" width="6.8" height="6.8" fill="#444"/><rect x="349.65" y="907.10" width="6.8" height="6.8" fill="#c9c9c9"/><rect x="358.70" y="907.10" width="6.8" height="6.8" fill="#c9c9c9"/><rect x="367.75" y="907.10" width="6.8" height="6.8" fill="#c9c9c9"/><rect x="394.00" y="879.80" width="6.8" height="6.8" fill="#444"/><rect x="403.05" y="879.80" width="6.8" height="6.8" fill="#444"/><rect x="412.10" y="879.80" width="6.8" height="6.8" fill="#444"/><rect x="421.15" y="879.80" width="6.8" height="6.8" fill="#444"/><rect x="394.00" y="888.90" width="6.8" height="6.8" fill="#c9c9c9"/><rect x="403.05" y="888.90" width="6.8" height="6.8" fill="#c9c9c9"/><rect x="412.10" y="888.90" width="6.8" height="6.8" fill="#c9c9c9"/><rect x="421.15" y="888.90" width="6.8" height="6.8" fill="#c9c9c9"/><rect x="394.00" y="898.00" width="6.8" height="6.8" fill="#c9c9c9"/><rect x="403.05" y="898.00" width="6.8" height="6.8" fill="#c9c9c9"/><rect x="412.10" y="898.00" width="6.8" height="6.8" fill="#c9c9c9"/><rect x="421.15" y="898.00" width="6.8" height="6.8" fill="#c9c9c9"/><rect x="394.00" y="907.10" width="6.8" height="6.8" fill="#c9c9c9"/><rect x="403.05" y="907.10" width="6.8" height="6.8" fill="#c9c9c9"/><rect x="412.10" y="907.10" width="6.8" height="6.8" fill="#c9c9c9"/><rect x="421.15" y="907.10" width="6.8" height="6.8" fill="#c9c9c9"/><rect x="446.50" y="879.80" width="6.8" height="6.8" fill="#c9c9c9"/><rect x="455.55" y="879.80" width="6.8" height="6.8" fill="#c9c9c9"/><rect x="464.60" y="879.80" width="6.8" height="6.8" fill="#c9c9c9"/><rect x="473.65" y="879.80" width="6.8" height="6.8" fill="#c9c9c9"/><rect x="446.50" y="888.90" width="6.8" height="6.8" fill="#c9c9c9"/><rect x="455.55" y="888.90" width="6.8" height="6.8" fill="#8a8a8a"/><rect x="464.60" y="888.90" width="6.8" height="6.8" fill="#8a8a8a"/><rect x="473.65" y="888.90" width="6.8" height="6.8" fill="#8a8a8a"/><rect x="446.50" y="898.00" width="6.8" height="6.8" fill="#c9c9c9"/><rect x="455.55" y="898.00" width="6.8" height="6.8" fill="#8a8a8a"/><rect x="464.60" y="898.00" width="6.8" height="6.8" fill="#5a5a5a"/><rect x="473.65" y="898.00" width="6.8" height="6.8" fill="#5a5a5a"/><rect x="446.50" y="907.10" width="6.8" height="6.8" fill="#c9c9c9"/><rect x="455.55" y="907.10" width="6.8" height="6.8" fill="#8a8a8a"/><rect x="464.60" y="907.10" width="6.8" height="6.8" fill="#5a5a5a"/><rect x="473.65" y="907.10" width="6.8" height="6.8" fill="#333"/></svg>
<div class="a" style="left:523.8px;top:112.1px;font-size:21.8px;line-height:21.8px;color:#6b6b6b;font-weight:400;font-style:normal;letter-spacing:0.17px;-webkit-text-stroke:0.35px #6b6b6b;">Field wells</div>
<div class="a" style="left:658.9px;top:114.9px;font-size:18.4px;line-height:18.4px;color:#1e1e1e;font-weight:700;font-style:normal;letter-spacing:0.1px;-webkit-text-stroke:0.15px #1e1e1e;">Group/Color</div>
<svg class="a" style="left:0;top:0" width="1600" height="977" viewBox="0 0 1600 977"><path d="M780.2,120L783.4,114.6H796.7V125.2H783.4Z" fill="none" stroke="#4aa3d8" stroke-width="1.7" stroke-linejoin="round"/></svg>
<div class="a" style="left:802.9px;top:114.2px;font-size:18.6px;line-height:18.6px;color:#555;font-weight:400;font-style:normal;letter-spacing:-0.25px;-webkit-text-stroke:0.35px #555;">churn?</div>
<div class="a" style="left:915.3px;top:114.5px;font-size:18.6px;line-height:18.6px;color:#9a9a9a;font-weight:700;font-style:normal;letter-spacing:0px;-webkit-text-stroke:0.15px #9a9a9a;">Value</div>
<div class="a" style="left:517px;top:161.5px;width:128px;height:51px;background:#f4f4f4;border:1px solid #dcdcdc;border-bottom:none"></div>
<div class="a" style="left:533.5px;top:180.2px;font-size:19.2px;line-height:19.2px;color:#1e1e1e;font-weight:700;font-style:normal;letter-spacing:0px;-webkit-text-stroke:0.15px #1e1e1e;">Sheet 1</div>
<svg class="a" style="left:0;top:0" width="1600" height="977" viewBox="0 0 1600 977"><path d="M618.5,182L627.6,191L636.7,182" fill="none" stroke="#555" stroke-width="1.6"/></svg>
<svg class="a" style="left:0;top:0" width="1600" height="977" viewBox="0 0 1600 977"><path d="M671.8,176.6V196.5M661.8,186.5H681.8" fill="none" stroke="#555" stroke-width="1.8"/></svg>
<div class="a" style="left:521px;top:225.5px;width:835px;height:547.5px;background:#fff;border:3.5px solid #3d9ad6"></div>
<div class="a" style="left:1352.5px;top:225.5px;width:46px;height:168.3px;background:#fff;border:3.5px solid #3d9ad6"></div>
<div class="a" style="left:1356px;top:269.5px;width:39.8px;height:1.2px;background:#e2e2e2"></div>
<svg class="a" style="left:0;top:0" width="1600" height="977" viewBox="0 0 1600 977"><g fill="none" stroke="#6e6e6e" stroke-width="1.7"><path d="M1367,241L1376.5,249.5L1386,241M1367,247L1376.5,255.5L1386,247"/></g></svg>
<svg class="a" style="left:0;top:0" width="1600" height="977" viewBox="0 0 1600 977"><g fill="none" stroke="#777" stroke-width="1.3" stroke-linejoin="round"><path d="M1383.40,290.30L1383.40,290.44L1383.40,290.57L1383.39,290.71L1383.38,290.84L1383.37,290.98L1383.36,291.12L1383.34,291.25L1383.32,291.39L1383.30,291.52L1383.31,291.66L1383.38,291.81L1383.49,291.98L1383.64,292.16L1383.82,292.35L1384.00,292.55L1384.19,292.76L1384.35,292.98L1384.48,293.19L1384.56,293.39L1384.59,293.57L1384.56,293.74L1384.50,293.90L1384.44,294.05L1384.37,294.20L1384.30,294.36L1384.23,294.51L1384.15,294.66L1384.08,294.81L1384.00,294.95L1383.91,295.10L1383.83,295.24L1383.74,295.39L1383.65,295.53L1383.56,295.67L1383.46,295.81L1383.37,295.94L1383.27,296.08L1383.16,296.21L1383.06,296.34L1382.93,296.45L1382.75,296.52L1382.54,296.55L1382.29,296.54L1382.03,296.51L1381.75,296.45L1381.48,296.39L1381.23,296.33L1381.00,296.29L1380.80,296.28L1380.63,296.30L1380.51,296.36L1380.40,296.45L1380.29,296.53L1380.18,296.61L1380.07,296.69L1379.96,296.77L1379.85,296.84L1379.73,296.91L1379.62,296.99L1379.50,297.05L1379.38,297.12L1379.26,297.19L1379.14,297.25L1379.02,297.31L1378.90,297.37L1378.77,297.43L1378.65,297.48L1378.52,297.53L1378.40,297.58L1378.28,297.66L1378.18,297.79L1378.09,297.97L1378.01,298.19L1377.93,298.44L1377.85,298.70L1377.76,298.97L1377.66,299.22L1377.54,299.43L1377.41,299.61L1377.26,299.72L1377.10,299.78L1376.94,299.81L1376.77,299.83L1376.60,299.85L1376.44,299.86L1376.27,299.88L1376.10,299.89L1375.94,299.89L1375.77,299.90L1375.60,299.90L1375.43,299.90L1375.26,299.89L1375.10,299.89L1374.93,299.88L1374.76,299.86L1374.60,299.85L1374.43,299.83L1374.26,299.81L1374.10,299.78L1373.94,299.72L1373.79,299.61L1373.66,299.43L1373.54,299.22L1373.44,298.97L1373.35,298.70L1373.27,298.44L1373.19,298.19L1373.11,297.97L1373.02,297.79L1372.92,297.66L1372.80,297.58L1372.68,297.53L1372.55,297.48L1372.43,297.43L1372.30,297.37L1372.18,297.31L1372.06,297.25L1371.94,297.19L1371.82,297.12L1371.70,297.05L1371.58,296.99L1371.47,296.91L1371.35,296.84L1371.24,296.77L1371.13,296.69L1371.02,296.61L1370.91,296.53L1370.80,296.45L1370.69,296.36L1370.57,296.30L1370.40,296.28L1370.20,296.29L1369.97,296.33L1369.72,296.39L1369.45,296.45L1369.17,296.51L1368.91,296.54L1368.66,296.55L1368.45,296.52L1368.27,296.45L1368.14,296.34L1368.04,296.21L1367.93,296.08L1367.83,295.94L1367.74,295.81L1367.64,295.67L1367.55,295.53L1367.46,295.39L1367.37,295.24L1367.29,295.10L1367.20,294.95L1367.12,294.81L1367.05,294.66L1366.97,294.51L1366.90,294.36L1366.83,294.20L1366.76,294.05L1366.70,293.90L1366.64,293.74L1366.61,293.57L1366.64,293.39L1366.72,293.19L1366.85,292.98L1367.01,292.76L1367.20,292.55L1367.38,292.35L1367.56,292.16L1367.71,291.98L1367.82,291.81L1367.89,291.66L1367.90,291.52L1367.88,291.39L1367.86,291.25L1367.84,291.12L1367.83,290.98L1367.82,290.84L1367.81,290.71L1367.80,290.57L1367.80,290.44L1367.80,290.30L1367.80,290.16L1367.80,290.03L1367.81,289.89L1367.82,289.76L1367.83,289.62L1367.84,289.48L1367.86,289.35L1367.88,289.21L1367.90,289.08L1367.89,288.94L1367.82,288.79L1367.71,288.62L1367.56,288.44L1367.38,288.25L1367.20,288.05L1367.01,287.84L1366.85,287.62L1366.72,287.41L1366.64,287.21L1366.61,287.03L1366.64,286.86L1366.70,286.70L1366.76,286.55L1366.83,286.40L1366.90,286.24L1366.97,286.09L1367.05,285.94L1367.12,285.79L1367.20,285.65L1367.29,285.50L1367.37,285.36L1367.46,285.21L1367.55,285.07L1367.64,284.93L1367.74,284.79L1367.83,284.66L1367.93,284.52L1368.04,284.39L1368.14,284.26L1368.27,284.15L1368.45,284.08L1368.66,284.05L1368.91,284.06L1369.17,284.09L1369.45,284.15L1369.72,284.21L1369.97,284.27L1370.20,284.31L1370.40,284.32L1370.57,284.30L1370.69,284.24L1370.80,284.15L1370.91,284.07L1371.02,283.99L1371.13,283.91L1371.24,283.83L1371.35,283.76L1371.47,283.69L1371.58,283.61L1371.70,283.55L1371.82,283.48L1371.94,283.41L1372.06,283.35L1372.18,283.29L1372.30,283.23L1372.43,283.17L1372.55,283.12L1372.68,283.07L1372.80,283.02L1372.92,282.94L1373.02,282.81L1373.11,282.63L1373.19,282.41L1373.27,282.16L1373.35,281.90L1373.44,281.63L1373.54,281.38L1373.66,281.17L1373.79,280.99L1373.94,280.88L1374.10,280.82L1374.26,280.79L1374.43,280.77L1374.60,280.75L1374.76,280.74L1374.93,280.72L1375.10,280.71L1375.26,280.71L1375.43,280.70L1375.60,280.70L1375.77,280.70L1375.94,280.71L1376.10,280.71L1376.27,280.72L1376.44,280.74L1376.60,280.75L1376.77,280.77L1376.94,280.79L1377.10,280.82L1377.26,280.88L1377.41,280.99L1377.54,281.17L1377.66,281.38L1377.76,281.63L1377.85,281.90L1377.93,282.16L1378.01,282.41L1378.09,282.63L1378.18,282.81L1378.28,282.94L1378.40,283.02L1378.52,283.07L1378.65,283.12L1378.77,283.17L1378.90,283.23L1379.02,283.29L1379.14,283.35L1379.26,283.41L1379.38,283.48L1379.50,283.55L1379.62,283.61L1379.73,283.69L1379.85,283.76L1379.96,283.83L1380.07,283.91L1380.18,283.99L1380.29,284.07L1380.40,284.15L1380.51,284.24L1380.63,284.30L1380.80,284.32L1381.00,284.31L1381.23,284.27L1381.48,284.21L1381.75,284.15L1382.03,284.09L1382.29,284.06L1382.54,284.05L1382.75,284.08L1382.93,284.15L1383.06,284.26L1383.16,284.39L1383.27,284.52L1383.37,284.66L1383.46,284.79L1383.56,284.93L1383.65,285.07L1383.74,285.21L1383.83,285.36L1383.91,285.50L1384.00,285.65L1384.08,285.79L1384.15,285.94L1384.23,286.09L1384.30,286.24L1384.37,286.40L1384.44,286.55L1384.50,286.70L1384.56,286.86L1384.59,287.03L1384.56,287.21L1384.48,287.41L1384.35,287.62L1384.19,287.84L1384.00,288.05L1383.82,288.25L1383.64,288.44L1383.49,288.62L1383.38,288.79L1383.31,288.94L1383.30,289.08L1383.32,289.21L1383.34,289.35L1383.36,289.48L1383.37,289.62L1383.38,289.76L1383.39,289.89L1383.40,290.03L1383.40,290.16Z"/><circle cx="1375.6" cy="290.3" r="4.2"/></g></svg>
<svg class="a" style="left:0;top:0" width="1600" height="977" viewBox="0 0 1600 977"><g fill="#6e6e6e" stroke="#6e6e6e" stroke-width="1.6"><path d="M1371,337.5L1376,332.5M1380.5,328L1384.5,324" fill="none"/><path d="M1368.5,333.5V340H1375Z" stroke="none"/><path d="M1385.5,323.5V330L1379,323.5Z" stroke="none"/></g></svg>
<svg class="a" style="left:0;top:0" width="1600" height="977" viewBox="0 0 1600 977"><g fill="#6e6e6e"><circle cx="1367.2" cy="371.2" r="2"/><circle cx="1375.8" cy="371.2" r="2"/><circle cx="1384.5" cy="371.2" r="2"/></g></svg>
<div class="a" style="left:537.0px;top:255.9px;font-size:21.3px;line-height:21.3px;color:#1e1e1e;font-weight:400;font-style:normal;letter-spacing:0.06px;-webkit-text-stroke:0.35px #1e1e1e;">Count of Records by Churn?</div>
<svg class="a" style="left:0;top:0" width="1600" height="977" viewBox="0 0 1600 977"><path d="M861.00,352.80A173.2,173.2 0 0 1 997.85,419.84L970.59,440.99A138.7,138.7 0 0 0 861.00,387.30Z" fill="#a9dbeb"/><path d="M997.85,419.84A173.2,173.2 0 1 1 861.00,352.80L861.00,387.30A138.7,138.7 0 1 0 970.59,440.99Z" fill="#365a75"/></svg>
<svg class="a" style="left:0;top:0" width="1600" height="977" viewBox="0 0 1600 977"><g fill="none" stroke="#1e1e1e" stroke-width="4.1" stroke-linejoin="bevel"><path d="M802.7,513.9H820.3L808.2,528Q810.5,527.6 812.5,527.6A8.1,7.5 0 0 1 812.5,542.6Q807,542.6 802.2,541"/><path transform="translate(38.9 0)" d="M802.7,513.9H820.3L808.2,528Q810.5,527.6 812.5,527.6A8.1,7.5 0 0 1 812.5,542.6Q807,542.6 802.2,541"/><path transform="translate(66.1 0)" d="M802.7,513.9H820.3L808.2,528Q810.5,527.6 812.5,527.6A8.1,7.5 0 0 1 812.5,542.6Q807,542.6 802.2,541"/></g><circle cx="832.4" cy="542" r="2.9" fill="#1e1e1e"/><path d="M896.9,512.1H901.4V525.6L914.9,512.1H920.3L906.3,527.6L921.6,543.9H915.6L902.8,530L901.4,531.4V543.9H896.9Z" fill="#1e1e1e"/></svg>
<svg class="a" style="left:0;top:0" width="1600" height="977" viewBox="0 0 1600 977"><path d="M936.7,370.5L943.5,356H967.4" fill="none" stroke="#a9dbeb" stroke-width="1.3"/></svg>
<svg class="a" style="left:0;top:0" width="1600" height="977" viewBox="0 0 1600 977"><path d="M785.2,681.3L778.3,696.2H754.4" fill="none" stroke="#365a75" stroke-width="1.3"/></svg>
<div class="a" style="left:975.4px;top:346.6px;font-size:16.5px;line-height:16.5px;color:#2a2a2a;font-weight:400;font-style:normal;letter-spacing:-0.75px;-webkit-text-stroke:0.35px #2a2a2a;">True.</div>
<div class="a" style="left:707.5px;top:687.3px;font-size:16.5px;line-height:16.5px;color:#2a2a2a;font-weight:400;font-style:normal;letter-spacing:-1.1px;-webkit-text-stroke:0.35px #2a2a2a;">False.</div>
<div class="a" style="left:1200.3px;top:297.9px;font-size:21px;line-height:21px;color:#1e1e1e;font-weight:400;font-style:normal;letter-spacing:0.35px;-webkit-text-stroke:0.35px #1e1e1e;">Churn</div>
<div class="a" style="left:1200.4px;top:356.8px;width:15.3px;height:15px;background:#a9dbeb"></div>
<div class="a" style="left:1200.4px;top:396.5px;width:15.3px;height:15px;background:#365a75"></div>
<div class="a" style="left:1223.0px;top:354.9px;font-size:18.4px;line-height:18.4px;color:#777;font-weight:400;font-style:normal;letter-spacing:0px;-webkit-text-stroke:0.35px #777;">True.</div>
<div class="a" style="left:1224.0px;top:394.7px;font-size:18.4px;line-height:18.4px;color:#777;font-weight:400;font-style:normal;letter-spacing:-0.5px;-webkit-text-stroke:0.35px #777;">False.</div>
<svg class="a" style="left:0;top:0" width="1600" height="977" viewBox="0 0 1600 977"><rect x="518.5" y="222.9" width="8.6" height="8.6" rx="1" fill="#fff" stroke="#111" stroke-width="1.8"/><rect x="934.0" y="222.9" width="8.6" height="8.6" rx="1" fill="#fff" stroke="#111" stroke-width="1.8"/><rect x="1349.9" y="222.9" width="8.6" height="8.6" rx="1" fill="#fff" stroke="#111" stroke-width="1.8"/><rect x="518.5" y="494.7" width="8.6" height="8.6" rx="1" fill="#fff" stroke="#111" stroke-width="1.8"/><rect x="1349.9" y="494.7" width="8.6" height="8.6" rx="1" fill="#fff" stroke="#111" stroke-width="1.8"/><rect x="518.5" y="766.7" width="8.6" height="8.6" rx="1" fill="#fff" stroke="#111" stroke-width="1.8"/><rect x="934.0" y="766.7" width="8.6" height="8.6" rx="1" fill="#fff" stroke="#111" stroke-width="1.8"/><rect x="1349.9" y="766.7" width="8.6" height="8.6" rx="1" fill="#fff" stroke="#111" stroke-width="1.8"/></svg>
</body></html>
